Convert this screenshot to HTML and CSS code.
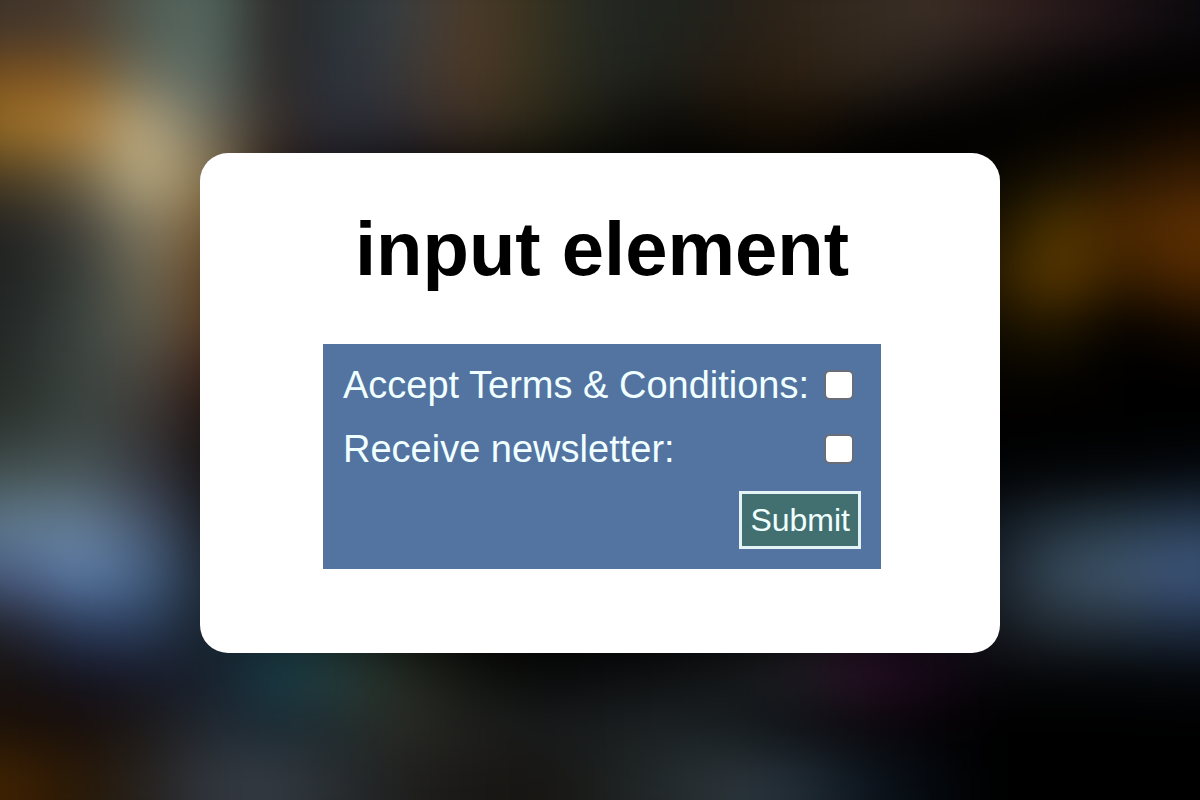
FILE: index.html
```html
<!DOCTYPE html>
<html lang="en">
<head>
<meta charset="utf-8">
<meta name="viewport" content="width=device-width, initial-scale=1">
<title>input element</title>
<link rel="stylesheet" href="styles.css">
</head>
<body>
<div class="backdrop" aria-hidden="true">
  <div class="band band-1"></div>
  <div class="band band-1"></div>
  <div class="band band-2"></div>
  <div class="band band-3"></div>
  <div class="band band-4"></div>
  <div class="band band-5"></div>
  <div class="band band-6"></div>
  <div class="band band-7"></div>
  <div class="band band-8"></div>
  <div class="band band-9"></div>
  <div class="band band-10"></div>
  <div class="band band-11"></div>
  <div class="band band-12"></div>
  <div class="band band-13"></div>
  <div class="band band-14"></div>
  <div class="band band-15"></div>
  <div class="band band-16"></div>
  <div class="band band-16"></div>
</div>
<main class="card">
  <h1 class="title">input element</h1>
  <form class="form">
    <div class="field">
      <label for="terms">Accept Terms &amp; Conditions:</label>
      <input class="check" type="checkbox" id="terms" name="terms">
    </div>
    <div class="field">
      <label for="newsletter">Receive newsletter:</label>
      <input class="check" type="checkbox" id="newsletter" name="newsletter">
    </div>
    <button class="submit" type="button">Submit</button>
  </form>
</main>
</body>
</html>
```

FILE: styles.css
```css
* {
  box-sizing: border-box;
}

body {
  margin: 0;
  min-height: 100vh;
  padding-top: 6px;
  display: flex;
  align-items: center;
  justify-content: center;
  background: #000;
  font-family: "Liberation Sans", Arial, Helvetica, sans-serif;
}

/* Blurred bands of colour that fill the window behind the card */
.backdrop {
  position: fixed;
  inset: -50px;
  z-index: -1;
  display: flex;
  flex-direction: column;
  filter: blur(25px);
}

.band {
  flex: 1;
}

.band-1 { background: linear-gradient(90deg, #40342a, #40342a, #4b3d30, #515b52, #566a63, #2a2624, #2b343a, #3a3e40, #4e3a28, #37321f, #232822, #20231d, #24201a, #2f2417, #332a20, #3a2e26, #33231f, #281a1a, #1c1116, #0c0a0c, #0c0a0c); }
.band-2 { background: linear-gradient(90deg, #70491d, #7c511f, #7c5726, #6e7061, #5b6b64, #2c2725, #2a333e, #3b3836, #4d3826, #37311e, #22251f, #1f1f19, #261c12, #2c1f10, #2e2419, #231b18, #120e0b, #060505, #000, #000, #000); }
.band-3 { background: linear-gradient(90deg, #8a6420, #9e7126, #b3823c, #b8aa84, #6e6c5e, #352a25, #2a2d38, #2e2b30, #3d2f24, #2a2716, #181810, #0b0a08, #120d05, #180f04, #080604, #030201, #000, #020100, #060301, #120800, #180b00); }
.band-4 { background: linear-gradient(90deg, #483a20, #503f22, #6f6245, #c2b48a, #8a754f, #201711, #14121a, #0a080a, #080605, #050503, #000, #000, #000, #000, #000, #000, #070501, #161003, #261502, #361b02, #3e1e02); }
.band-5 { background: linear-gradient(90deg, #242321, #242422, #42403a, #878068, #7a5c34, #150d08, #000, #000, #000, #000, #000, #000, #000, #000, #000, #000, #150f00, #4d3400, #4a2701, #5c2f02, #603102); }
.band-6 { background: linear-gradient(90deg, #1e2121, #202321, #363c38, #6f6a56, #654424, #100805, #000, #000, #000, #000, #000, #000, #000, #000, #000, #000, #281b00, #623d00, #351d00, #4e2700, #562b00); }
.band-7 { background: linear-gradient(90deg, #222625, #242827, #3b4440, #5c5c4e, #5b3a20, #0d0705, #000, #000, #000, #000, #000, #000, #000, #000, #000, #000, #120d00, #241800, #040200, #120800, #1c0d00); }
.band-8 { background: linear-gradient(90deg, #242a26, #262c28, #3c4542, #4b4640, #381f16, #080403, #000, #000, #000, #000, #000, #000, #000, #000, #000, #000, #060400, #070400, #000, #000, #000); }
.band-9 { background: linear-gradient(90deg, #2c3330, #2e3531, #3d4744, #3a3836, #1e1311, #080404, #000, #000, #000, #000, #000, #000, #000, #000, #000, #000, #000, #000, #000, #000, #000); }
.band-10 { background: linear-gradient(90deg, #435053, #455353, #4b5a5e, #383b45, #171415, #060606, #000, #000, #000, #000, #000, #000, #000, #000, #000, #000, #020304, #030507, #040608, #050a10, #060b12); }
.band-11 { background: linear-gradient(90deg, #5c7588, #617c91, #668098, #485870, #1a1d24, #080a0c, #000, #000, #000, #000, #000, #000, #000, #000, #000, #000, #101720, #22303a, #283b49, #2a3e55, #2a3e55); }
.band-12 { background: linear-gradient(90deg, #46587c, #4b5e85, #6080ac, #486589, #1b232e, #0c1216, #000, #000, #000, #000, #000, #000, #000, #000, #000, #060809, #161e26, #384b5c, #42586f, #3e577f, #3e577f); }
.band-13 { background: linear-gradient(90deg, #201f27, #232530, #2c3e60, #2c405e, #182129, #10242b, #101a18, #080a08, #000, #000, #000, #000, #000, #060608, #0c060c, #08060a, #15181e, #232d36, #232f3c, #1f2e45, #1f2e45); }
.band-14 { background: linear-gradient(90deg, #16110f, #16110f, #131320, #171928, #161e2b, #173c48, #263e3d, #242a20, #121410, #090a09, #0b0c0d, #0f1012, #15181a, #201f24, #2a1128, #1a081c, #07060a, #050608, #040608, #05080b, #05080b); }
.band-15 { background: linear-gradient(90deg, #1c1006, #1a1008, #170d0b, #1b1918, #222831, #1a2a33, #202c2e, #2a2b24, #1f201e, #181a1b, #191d1f, #1b2123, #151b1d, #0b0f12, #0c080c, #050205, #000, #000, #000, #000, #000); }
.band-16 { background: linear-gradient(90deg, #4a2702, #3c2002, #281806, #25211e, #31363e, #333a42, #262b2e, #1f1f1e, #1a1816, #171512, #1b1e1d, #232a2c, #2b343a, #232e38, #0e1720, #050a10, #000, #000, #000, #000, #000); }

.card {
  width: 100%;
  max-width: 800px;
  padding: 53px 40px 84px 44px;
  border-radius: 28px;
  background: #fff;
}

.title {
  margin: 0 0 52px;
  font-size: 76px;
  line-height: 86px;
  font-weight: 700;
  text-align: center;
  color: #000;
}

.form {
  max-width: 558px;
  margin: 0 auto;
  padding: 19px 20px 20px;
  display: flex;
  flex-direction: column;
  gap: 20px;
  background: #5373a1;
  color: #f0ffff;
  font-size: 38px;
  line-height: 44px;
}

.field {
  display: flex;
  align-items: center;
  justify-content: space-between;
}

.check {
  appearance: none;
  flex: none;
  width: 30px;
  height: 30px;
  margin: 0 7px 0 0;
  border: 2px solid #696d78;
  border-radius: 6px;
  background: #fff;
}

.check:checked {
  background: #427070;
  box-shadow: inset 0 0 0 4px #fff;
}

.submit {
  align-self: flex-end;
  padding: 8px;
  border: 3px solid #e4f3f5;
  border-radius: 0;
  background: #427070;
  color: #f0ffff;
  font-family: inherit;
  font-size: 32px;
  line-height: 36px;
}
```
